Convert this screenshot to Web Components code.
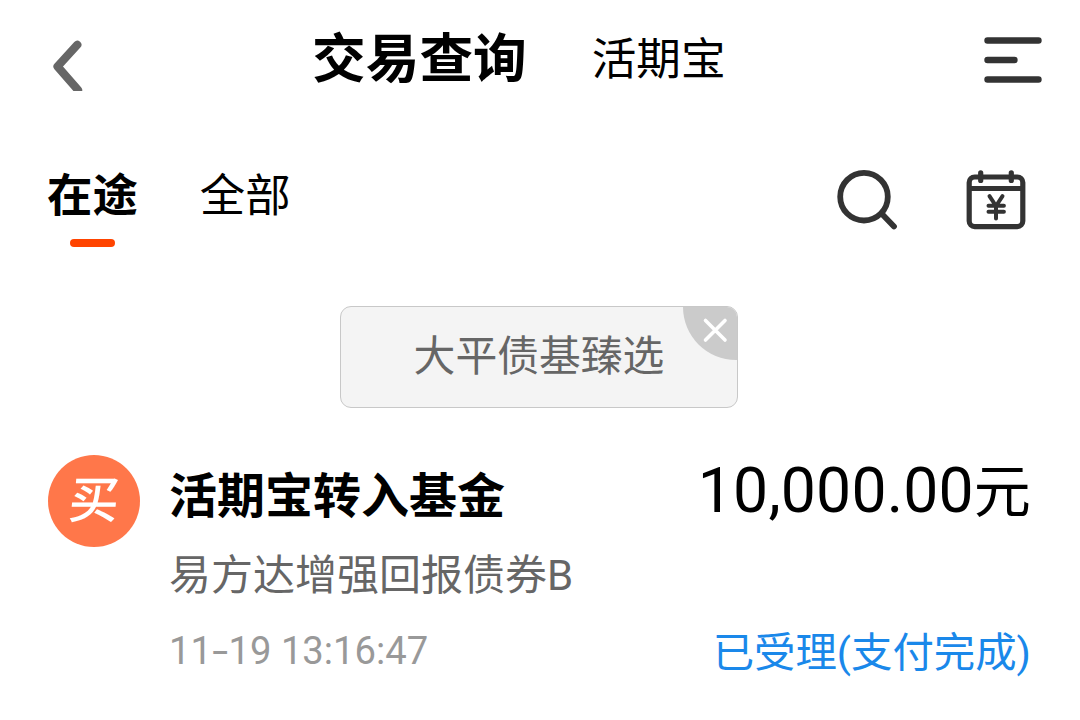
<!DOCTYPE html>
<html lang="zh-CN">
<head>
<meta charset="UTF-8">
<title>交易查询</title>
<style>
  body {
    margin: 0;
    width: 1080px;
    height: 720px;
    overflow: hidden;
    background: #fff;
    color: #000;
    font-family: Roboto, "Noto Sans CJK SC", sans-serif;
  }
  .dash {
    display: inline-block;
    margin: 0 3px;
    transform: scaleX(1.5);
  }
</style>
</head>
<body>
<trade-page>
  <nav-header slot="header">
    <span slot="title">交易查询</span>
    <span slot="other">活期宝</span>
  </nav-header>
  <tab-bar slot="tabs">
    <tab-item active>在途</tab-item>
    <tab-item>全部</tab-item>
  </tab-bar>
  <promo-tag>大平债基臻选</promo-tag>
  <trade-item>
    <span slot="badge">买</span>
    <span slot="title">活期宝转入基金</span>
    <span slot="amount">10,000.00</span>
    <span slot="unit">元</span>
    <span slot="name">易方达增强回报债券B</span>
    <span slot="time">11<span class="dash">-</span>19 13:16:47</span>
    <span slot="status">已受理(支付完成)</span>
  </trade-item>
</trade-page>

<script>
class TradePage extends HTMLElement {
  connectedCallback() {
    this.attachShadow({ mode: 'open' });
    this.shadowRoot.innerHTML = `
      <style>
        :host {
          display: flex;
          flex-direction: column;
          height: 720px;
        }
        main {
          display: flex;
          flex-direction: column;
          align-items: center;
          padding-top: 46px;
        }
      </style>
      <slot name="header"></slot>
      <slot name="tabs"></slot>
      <main><slot></slot></main>
    `;
  }
}

class NavHeader extends HTMLElement {
  connectedCallback() {
    this.attachShadow({ mode: 'open' });
    this.shadowRoot.innerHTML = `
      <style>
        :host {
          display: grid;
          grid-template-columns: 312px 1fr 110px;
          align-items: center;
          height: 120px;
          box-sizing: border-box;
        }
        svg { display: block; }
        .back { margin: 11px 0 0 47px; }
        .titles {
          display: flex;
          align-items: center;
          gap: 65px;
          height: 120px;
          white-space: nowrap;
        }
        .title {
          font-size: 53.7px;
          font-weight: 700;
          line-height: 122px;
        }
        .other {
          font-size: 44.6px;
          line-height: 120px;
        }
        .menu { margin-left: 10px; }
      </style>
      <svg class="back" width="40" height="51" viewBox="0 0 40 51" fill="none" stroke="#666" stroke-width="8.2" stroke-linecap="round" stroke-linejoin="round">
        <path d="M30.3 4.8 10.5 26.5 31 50"/>
      </svg>
      <div class="titles">
        <div class="title"><slot name="title"></slot></div>
        <div class="other"><slot name="other"></slot></div>
      </div>
      <svg class="menu" width="66" height="50" viewBox="0 0 66 50" fill="none" stroke="#333" stroke-width="6.4" stroke-linecap="round">
        <path d="M7.5 5.5h51M7.5 25h27M7.5 44.5h51"/>
      </svg>
    `;
  }
}

class TabBar extends HTMLElement {
  connectedCallback() {
    this.attachShadow({ mode: 'open' });
    this.shadowRoot.innerHTML = `
      <style>
        :host {
          display: flex;
          justify-content: space-between;
          height: 140px;
          padding: 0 50px 0 47px;
          box-sizing: border-box;
        }
        .tabs {
          display: flex;
          gap: 62px;
        }
        .tools {
          display: flex;
          gap: 68px;
          padding-top: 48px;
        }
        svg { display: block; }
      </style>
      <div class="tabs"><slot></slot></div>
      <div class="tools">
        <svg width="64" height="64" viewBox="0 0 64 64" fill="none" stroke="#333" stroke-width="5.8" stroke-linecap="round">
          <circle cx="30" cy="28.7" r="23.8"/>
          <path d="M48 46 60 58.5"/>
        </svg>
        <svg width="64" height="64" viewBox="0 0 64 64" fill="none" stroke="#333" stroke-width="5.2" stroke-linecap="round" stroke-linejoin="round">
          <rect x="3.2" y="9" width="53.6" height="49.6" rx="5.5"/>
          <path d="M4 20.5h52" stroke-width="5" stroke-linecap="butt"/>
          <path d="M14.7 4.8v7.6M45.3 4.8v7.6"/>
          <path d="M23.5 28.2 30 38l6.5-9.800M22.5 37.800h15.4M22.5 43.800h15.4M30 38v12.600" stroke-width="4"/>
        </svg>
      </div>
    `;
  }
}

class TabItem extends HTMLElement {
  connectedCallback() {
    this.attachShadow({ mode: 'open' });
    this.shadowRoot.innerHTML = `
      <style>
        :host {
          display: flex;
          flex-direction: column;
          align-items: center;
          padding-top: 42px;
          font-size: 45.4px;
          line-height: 70px;
          white-space: nowrap;
        }
        :host([active]) { font-weight: 700; }
        .line { display: none; }
        :host([active]) .line {
          display: block;
          width: 45px;
          height: 8px;
          margin-top: 7px;
          border-radius: 4px;
          background: #ff4400;
        }
      </style>
      <slot></slot>
      <div class="line"></div>
    `;
  }
}

class PromoTag extends HTMLElement {
  connectedCallback() {
    this.attachShadow({ mode: 'open' });
    this.shadowRoot.innerHTML = `
      <style>
        :host {
          display: block;
          position: relative;
          width: 398px;
          height: 102px;
          margin-right: 2px;
          box-sizing: border-box;
          border: 1.5px solid #c8c8c8;
          border-radius: 11px;
          overflow: hidden;
          background: #f4f4f4;
          color: #666;
          font-size: 41.8px;
          line-height: 99px;
          text-align: center;
        }
        /* close corner lies over the tag */
        .close {
          position: absolute;
          top: 0;
          right: 0;
          width: 54px;
          height: 53px;
          border-radius: 0 0 0 54px;
          background: #cbcbcb;
        }
        svg { display: block; }
      </style>
      <slot></slot>
      <div class="close">
        <svg width="54" height="53" viewBox="0 0 54 53" fill="none" stroke="#fff" stroke-width="3.6" stroke-linecap="round">
          <path d="M22.5 13.5l19.5 19.5M42 13.5 22.5 33"/>
        </svg>
      </div>
    `;
  }
}

class TradeItem extends HTMLElement {
  connectedCallback() {
    this.attachShadow({ mode: 'open' });
    this.shadowRoot.innerHTML = `
      <style>
        :host {
          display: grid;
          grid-template-columns: 92px 1fr;
          column-gap: 29px;
          width: 1080px;
          box-sizing: border-box;
          padding: 47px 49px 0 48px;
          white-space: nowrap;
        }
        .badge {
          width: 92px;
          height: 92px;
          border-radius: 50%;
          background: #ff774a;
          color: #fff;
          font-size: 50px;
          font-weight: 500;
          line-height: 92px;
          text-align: center;
        }
        .badge slot {
          display: block;
          transform: skewX(-5deg);
        }
        .row {
          display: flex;
          justify-content: space-between;
        }
        .title {
          height: 80px;
          font-size: 48px;
          font-weight: 700;
          line-height: 84px;
        }
        .amount {
          font-size: 62.5px;
          line-height: 72px;
          letter-spacing: 0.15px;
        }
        .unit { font-size: 57px; }
        .name {
          color: #666;
          font-size: 42px;
          line-height: 81px;
        }
        .time {
          color: #999;
          font-size: 38.2px;
          line-height: 71px;
        }
        .status {
          color: #1a88ea;
          font-size: 41.4px;
          line-height: 74px;
        }
      </style>
      <div class="badge"><slot name="badge"></slot></div>
      <div>
        <div class="row">
          <div class="title"><slot name="title"></slot></div>
          <div class="amount"><slot name="amount"></slot><span class="unit"><slot name="unit"></slot></span></div>
        </div>
        <div class="name"><slot name="name"></slot></div>
        <div class="row">
          <div class="time"><slot name="time"></slot></div>
          <div class="status"><slot name="status"></slot></div>
        </div>
      </div>
    `;
  }
}

customElements.define('trade-page', TradePage);
customElements.define('nav-header', NavHeader);
customElements.define('tab-bar', TabBar);
customElements.define('tab-item', TabItem);
customElements.define('promo-tag', PromoTag);
customElements.define('trade-item', TradeItem);
</script>
</body>
</html>
